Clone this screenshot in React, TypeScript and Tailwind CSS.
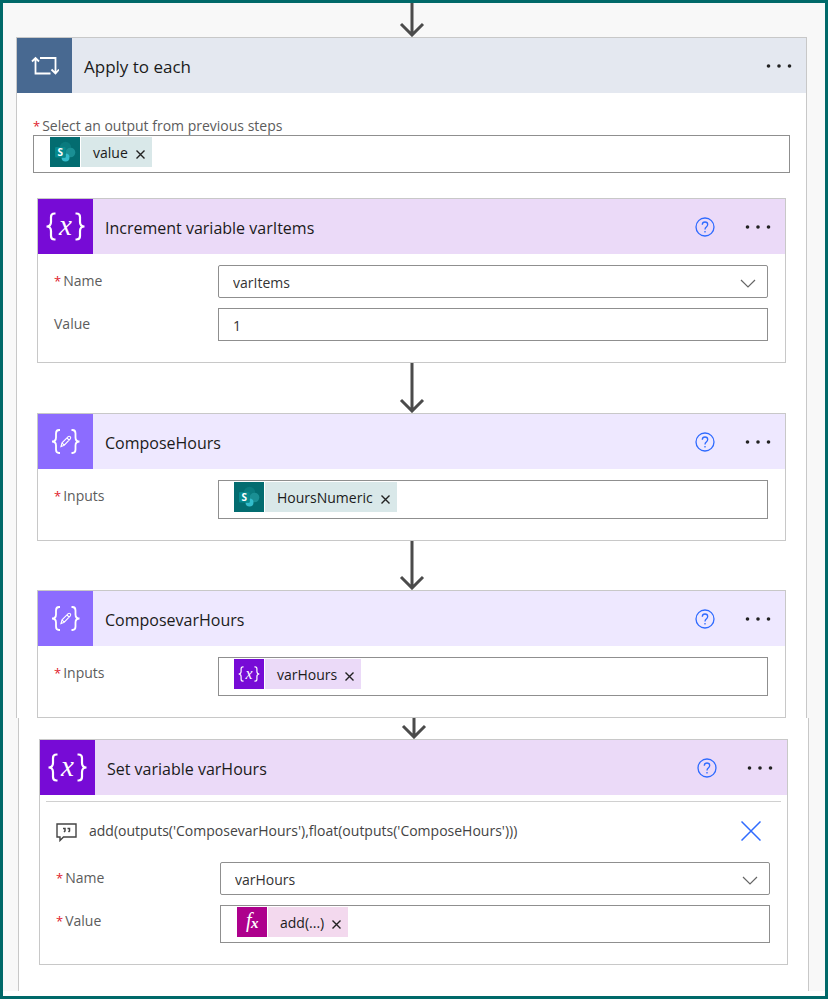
import type { ReactNode } from 'react';

const field = 'w-full min-w-0 bg-white border border-[#8f8f8f] text-[14px] text-[#333333]';

function DownArrow({ height }: { height: number }) {
  return (
    <svg className="mx-auto block" width="28" height={height} viewBox={`0 0 28 ${height}`} fill="none" stroke="#4b4b4b" strokeWidth="3" aria-hidden="true">
      <path d={`M14 0V${height - 2}M3 ${height - 13}L14 ${height - 2}L25 ${height - 13}`} />
    </svg>
  );
}

function LoopIcon() {
  return (
    <svg width="28" height="20" viewBox="0 0 28 20" fill="none" stroke="#ffffff" strokeWidth="1.8" aria-hidden="true">
      <path d="M4.500 2V17.500H19.500M1 5.500L4.500 2L8 5.500M9 2H24.500V17M20.500 13.500L24.500 17.500L28 13.500" />
    </svg>
  );
}

function VariableIcon({ size }: { size: number }) {
  return (
    <svg width={size} height={size} viewBox="0 0 55 55" fill="none" stroke="#ffffff" strokeWidth="2.2" aria-hidden="true">
      <path d="M17.500 14.500H16.500Q13 14.500 13 18V23Q13 27.500 8.500 27.500Q13 27.500 13 32V37Q13 40.500 16.500 40.500H17.500" />
      <path d="M37.500 14.500H38.500Q42 14.500 42 18V23Q42 27.500 46.500 27.500Q42 27.500 42 32V37Q42 40.500 38.500 40.500H37.500" />
      <text x="27.500" y="36" textAnchor="middle" fontFamily="Liberation Serif, serif" fontStyle="italic" fontSize="29" fill="#ffffff" stroke="none">x</text>
    </svg>
  );
}

function ComposeIcon() {
  return (
    <svg width="55" height="55" viewBox="0 0 55 55" fill="none" stroke="#ffffff" strokeWidth="1.8" aria-hidden="true">
      <path d="M22 16H21Q18 16 18 19.500V23.500Q18 27.500 14 27.500Q18 27.500 18 31.500V35.500Q18 39 21 39H22" />
      <path d="M33.500 16H34.500Q37.500 16 37.500 19.500V23.500Q37.500 27.500 41.500 27.500Q37.500 27.500 37.500 31.500V35.500Q37.500 39 34.500 39H33.500" />
      <path strokeWidth="1.1" d="M23 32.500L24 28.800L30.200 22.600Q31.200 21.800 32.200 22.700Q33.200 23.800 32.300 24.800L26.200 31.200ZM24 28.800L26.200 31.200M29 24L31.200 26.200" />
    </svg>
  );
}

function SharePointIcon() {
  return (
    <svg width="30" height="30" viewBox="0 0 30 30" aria-hidden="true">
      <circle cx="15.500" cy="10.500" r="5.700" fill="#0a7a7e" />
      <circle cx="20.500" cy="15.500" r="4.800" fill="#1a8f94" />
      <path d="M11.500 20.500H15.500V16.500A4 4 0 1 1 11.500 20.500Z" fill="#33bccb" />
      <rect x="5" y="10" width="10.500" height="10.500" rx="1" fill="#068a8e" />
      <text x="10.200" y="18.800" textAnchor="middle" fontFamily="Open Sans, sans-serif" fontWeight="700" fontSize="10" fill="#ffffff">S</text>
    </svg>
  );
}

function FxIcon() {
  return (
    <svg width="30" height="30" viewBox="0 0 30 30" aria-hidden="true" fill="#ffffff" fontFamily="Liberation Serif, serif" fontStyle="italic">
      <text x="9" y="20" fontSize="20">f</text>
      <text x="14" y="21" fontSize="15" fontWeight="700">x</text>
    </svg>
  );
}

function CardHeader({ title, icon, iconBg, bg, nested = true }: { title: string; icon: ReactNode; iconBg: string; bg: string; nested?: boolean }) {
  return (
    <header className={`flex h-[55px] items-center ${bg}`}>
      <div className={`flex size-[55px] shrink-0 items-center justify-center ${iconBg}`}>{icon}</div>
      <h2 className={`min-w-0 flex-1 truncate pt-[2px] pl-3 leading-6 text-[#1b1b1b] ${nested ? 'text-[16px]' : 'text-[17px]'}`}>{title}</h2>
      {nested && (
        <button type="button" aria-label="Help" className="mr-7 shrink-0">
          <svg width="20" height="20" viewBox="0 0 20 20" fill="none" stroke="#2f6bff" strokeWidth="1.300">
            <circle cx="10" cy="10" r="9" />
            <path d="M7.300 7.700Q7.300 5 10 5Q12.700 5 12.700 7.500Q12.700 8.800 11.300 9.900Q10 10.900 10 12.400M10 14V15.500" />
          </svg>
        </button>
      )}
      <button type="button" aria-label="More commands" className="mr-3 shrink-0">
        <svg width="30" height="20" viewBox="0 0 30 20" fill="#222222">
          <circle cx="4.500" cy="10" r="1.800" />
          <circle cx="15" cy="10" r="1.800" />
          <circle cx="25.500" cy="10" r="1.800" />
        </svg>
      </button>
    </header>
  );
}

function Card({ children }: { children: ReactNode }) {
  return <section className="border border-[#c8c8c8] bg-white">{children}</section>;
}

function Star() {
  return <span className="mr-[2px] text-[13px] text-[#e0202c]">*</span>;
}

function Row({ id, label, required, children }: { id: string; label: string; required?: boolean; children: ReactNode }) {
  return (
    <div className="flex items-start">
      <label htmlFor={id} className="w-[164px] shrink-0 text-[14px] leading-8 text-[#5c5c5c]">
        {required && <Star />}
        {label}
      </label>
      <div className="min-w-0 flex-1">{children}</div>
    </div>
  );
}

function Dropdown({ id, value }: { id: string; value: string }) {
  return (
    <div className="relative">
      <select id={id} defaultValue={value} className={`${field} h-[33px] appearance-none rounded-[2px] border-[#5f5f5f] pt-px pl-[14px]`}>
        <option>{value}</option>
      </select>
      <svg className="pointer-events-none absolute top-[14px] right-3" width="16" height="10" viewBox="0 0 16 10" fill="none" stroke="#666666" strokeWidth="1.200" aria-hidden="true">
        <path d="M1 1L8 8L15 1" />
      </svg>
    </div>
  );
}

function TokenField({ id, token, icon, iconBg, bg, tall }: { id: string; token: string; icon: ReactNode; iconBg: string; bg: string; tall?: boolean }) {
  return (
    <div className={`${field} flex items-start ${tall ? 'h-[39px] pt-px pl-[15px]' : 'h-[38px] pt-px pl-4'}`}>
      <span className="flex h-[30px] shrink-0 gap-px text-[#1b1b1b]">
        <span className={`flex size-[30px] items-center justify-center ${iconBg}`}>{icon}</span>
        <span className={`flex items-center pr-[7px] pl-3 ${bg}`}>
          <span className="pt-[2px] leading-7">{token}</span>
          <button type="button" aria-label={`Remove ${token}`} className="mt-[4px] ml-2">
            <svg width="9" height="9" viewBox="0 0 9 9" stroke="#222222" strokeWidth="1.400">
              <path d="M0.500 0.500L8.500 8.500M8.500 0.500L0.500 8.500" />
            </svg>
          </button>
        </span>
      </span>
      <input id={id} type="text" className="h-[30px] min-w-0 flex-1 px-1 outline-none" />
    </div>
  );
}

const lilac = 'bg-[#ebdaf8]';
const violet = 'bg-[#770bd6]';
const bodyClass = 'flex flex-col gap-[10px] pt-[11px] pr-[17px] pb-[21px] pl-4';

export default function App() {
  return (
    <main className="border-[3px] border-[#006969] bg-white pb-[5px] font-['Open_Sans','Noto_Sans',sans-serif]">
      <div className="bg-[#f8f8f8] pr-[18px] pl-[13px]">
        <DownArrow height={34} />
        <section className="border border-b-0 border-[#c8c8c8] bg-white">
          <CardHeader title="Apply to each" icon={<LoopIcon />} iconBg="bg-[#486991]" bg="bg-[#e4e8f0]" nested={false} />
          <div className="px-4 pt-6">
            <label htmlFor="source" className="block text-[14px] leading-[18px] text-[#5c5c5c]">
              <Star />
              Select an output from previous steps
            </label>
            <TokenField id="source" token="value" icon={<SharePointIcon />} iconBg="bg-[#036c70]" bg="bg-[#d9e8e9]" />
          </div>
          <div className="px-5 pt-[25px]">
            <Card>
              <CardHeader title="Increment variable varItems" icon={<VariableIcon size={55} />} iconBg={violet} bg={lilac} />
              <div className={bodyClass}>
                <Row id="inc-name" label="Name" required>
                  <Dropdown id="inc-name" value="varItems" />
                </Row>
                <Row id="inc-value" label="Value">
                  <input id="inc-value" type="text" defaultValue="1" className={`${field} block h-[33px] pt-px pl-[14px]`} />
                </Row>
              </div>
            </Card>
            <DownArrow height={50} />
            <Card>
              <CardHeader title="ComposeHours" icon={<ComposeIcon />} iconBg="bg-[#8c6cff]" bg="bg-[#eee8ff]" />
              <div className={bodyClass}>
                <Row id="compose-hours" label="Inputs" required>
                  <TokenField id="compose-hours" token="HoursNumeric" icon={<SharePointIcon />} iconBg="bg-[#036c70]" bg="bg-[#d9e8e9]" tall />
                </Row>
              </div>
            </Card>
            <DownArrow height={49} />
            <Card>
              <CardHeader title="ComposevarHours" icon={<ComposeIcon />} iconBg="bg-[#8c6cff]" bg="bg-[#eee8ff]" />
              <div className={bodyClass}>
                <Row id="compose-var" label="Inputs" required>
                  <TokenField id="compose-var" token="varHours" icon={<VariableIcon size={30} />} iconBg={violet} bg={lilac} tall />
                </Row>
              </div>
            </Card>
          </div>
        </section>
      </div>
      <div className="bg-[#f8f8f8] pr-4 pl-[15px]">
        <div className="border-x border-[#c8c8c8] bg-white px-5 pb-[26px]">
          <DownArrow height={21} />
          <Card>
            <CardHeader title="Set variable varHours" icon={<VariableIcon size={55} />} iconBg={violet} bg={lilac} />
            <div className="mx-[6px] mt-[6px] flex items-center border-t border-[#d0d0d0] pt-[17px] pr-5 pl-[10px]">
              <svg width="21" height="20" viewBox="0 0 21 20" fill="none" stroke="#444444" strokeWidth="1.400" className="mt-[3px] shrink-0" aria-hidden="true">
                <path d="M1 2H20V15H7.500L4 18.500V15H1Z" />
                <path d="M7 6.500H9V9L8 10M11.500 6.500H13.500V9L12.500 10" strokeWidth="1.500" />
              </svg>
              <p className="min-w-0 flex-1 truncate pl-3 text-[14px] leading-5 text-[#444444]">add(outputs('ComposevarHours'),float(outputs('ComposeHours')))</p>
              <button type="button" aria-label="Delete note" className="shrink-0">
                <svg width="20" height="20" viewBox="0 0 20 20" stroke="#2f6bff" strokeWidth="1.500">
                  <path d="M0.500 0.500L19.500 19.500M19.500 0.500L0.500 19.500" />
                </svg>
              </button>
            </div>
            <div className="flex flex-col gap-[10px] pt-5 pr-[17px] pb-[21px] pl-4">
              <Row id="set-name" label="Name" required>
                <Dropdown id="set-name" value="varHours" />
              </Row>
              <Row id="set-value" label="Value" required>
                <TokenField id="set-value" token="add(...)" icon={<FxIcon />} iconBg="bg-[#ad008c]" bg="bg-[#f3d9ee]" />
              </Row>
            </div>
          </Card>
        </div>
      </div>
    </main>
  );
}
